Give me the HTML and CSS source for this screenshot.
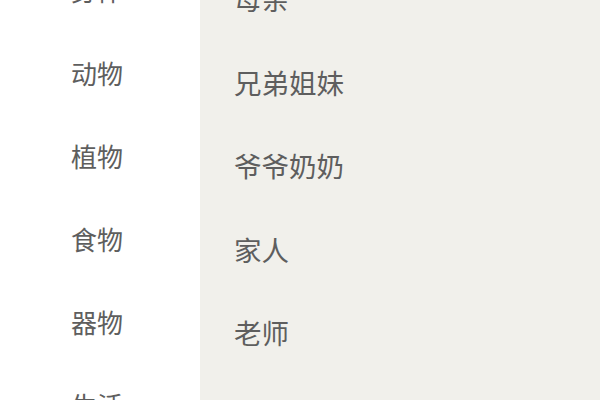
FILE: index.html
```html
<!DOCTYPE html>
<html lang="zh-CN">
<head>
<meta charset="utf-8">
<title>分类</title>
<link rel="stylesheet" href="styles.css">
</head>
<body>
<div class="page">
  <ul class="cats">
    <li class="cat">身体</li>
    <li class="cat">动物</li>
    <li class="cat">植物</li>
    <li class="cat">食物</li>
    <li class="cat">器物</li>
    <li class="cat">生活</li>
  </ul>
  <ul class="subs">
    <li class="sub">母亲</li>
    <li class="sub">兄弟姐妹</li>
    <li class="sub">爷爷奶奶</li>
    <li class="sub">家人</li>
    <li class="sub">老师</li>
    <li class="sub">朋友</li>
  </ul>
</div>
</body>
</html>
```

FILE: styles.css
```css
html, body {
  margin: 0;
  padding: 0;
  height: 100%;
  overflow: hidden;
  background: #ffffff;
}
.page {
  display: flex;
  height: 400px;
  overflow: hidden;
  font-family: "Noto Sans CJK SC", "Noto Sans", sans-serif;
  color: #5e5e5e;
}
.cats, .subs {
  list-style: none;
  margin: 0;
  padding: 0;
}
.cats {
  width: 200px;
  flex: none;
  background: #ffffff;
  margin-top: -52px;
}
.cat {
  height: 83px;
  line-height: 83px;
  font-size: 26px;
  padding-left: 71px;
}
.subs {
  flex: 1;
  background: #f1f0eb;
}
.sub {
  height: 83.5px;
  line-height: 83.5px;
  font-size: 27.5px;
  padding-left: 34px;
}
.subs .sub:first-child {
  margin-top: -43px;
}
```
